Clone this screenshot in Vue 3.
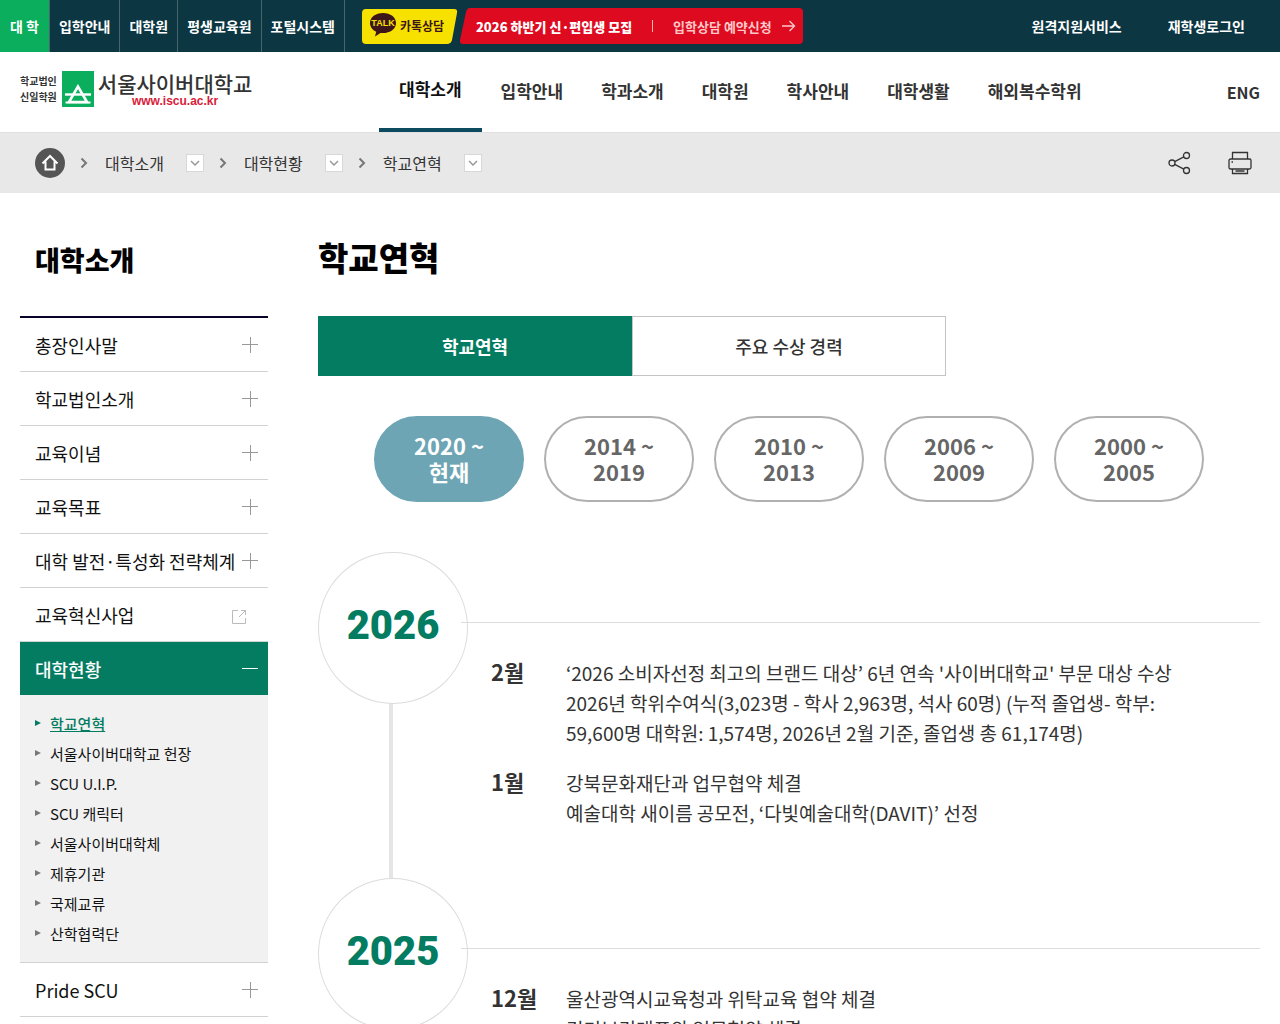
<template>
  <div class="page">
    <div class="topbar">
      <nav class="sites">
        <a v-for="(site, index) in sites" :key="site" href="#" :class="{ on: index === 0 }">{{ site }}</a>
      </nav>
      <a href="#" class="talk">
        <svg class="shape" viewBox="0 0 96 35" aria-hidden="true">
          <path d="M4 0H92Q96 0 95 4L90 31Q89 35 85 35H4Q0 35 0 31V4Q0 0 4 0Z" fill="#f7e100" />
        </svg>
        <svg class="bubble" viewBox="0 0 26 24" aria-hidden="true">
          <path d="M13 0C5.500 0 0 4.300 0 10C0 14 2.500 17 6.200 18.800L5 23.500L10.500 20C19.500 20.800 26 16.500 26 10C26 4.300 20.500 0 13 0Z" fill="#3c1618" />
          <text x="13" y="13" text-anchor="middle">TALK</text>
        </svg>
        <span>카톡상담</span>
      </a>
      <a href="#" class="apply">
        <svg class="shape" viewBox="0 0 343 36" aria-hidden="true">
          <path d="M10 0H339Q343 0 343 4V32Q343 36 339 36H3Q-1 36 0 32L6 4Q7 0 10 0Z" fill="#de0a20" />
        </svg>
        <strong>2026 하반기 신·편입생 모집</strong>
        <i class="bar"></i>
        <span class="reserve">입학상담 예약신청</span>
        <svg class="arrow" viewBox="0 0 14 12" aria-hidden="true">
          <path d="M0 6H12M7.500 1L12.500 6L7.500 11" fill="none" stroke="#ffc9c9" stroke-width="1.400" />
        </svg>
      </a>
      <nav class="util">
        <a href="#">원격지원서비스</a>
        <a href="#">재학생로그인</a>
      </nav>
    </div>

    <header class="header">
      <a href="#" class="logo">
        <span class="corp">학교법인<br />신일학원</span>
        <svg class="mark" viewBox="0 0 32 36" aria-hidden="true">
          <rect width="32" height="36" fill="#0aae5c" />
          <path d="M16 15.500L7 31H25Z" fill="none" stroke="#fff" stroke-width="2.600" />
          <path d="M3 23.500H29" stroke="#fff" stroke-width="2.400" />
          <path d="M3.500 31.500H28.500" stroke="#fff" stroke-width="2" />
        </svg>
        <span class="name">
          <b>서울사이버대학교</b>
          <em>www.iscu.ac.kr</em>
        </span>
      </a>
      <nav class="gnb">
        <a v-for="(menu, index) in menus" :key="menu" href="#" :class="{ on: index === 0 }">{{ menu }}</a>
      </nav>
      <a href="#" class="lang">ENG</a>
    </header>

    <div class="location">
      <a href="#" class="home" aria-label="홈">
        <svg viewBox="0 0 30 30" aria-hidden="true">
          <path d="M7.500 15.500L15 8L22.500 15.500M10.500 13.500V21.500H19.500V13.500" fill="none" stroke="#fff" stroke-width="2" />
        </svg>
      </a>
      <div v-for="crumb in crumbs" :key="crumb" class="crumb">
        <svg class="next" viewBox="0 0 8 12" aria-hidden="true">
          <path d="M1.500 1.500L6 6L1.500 10.500" fill="none" stroke="#777" stroke-width="2" />
        </svg>
        <a href="#">{{ crumb }}</a>
        <button type="button" :aria-label="crumb + ' 메뉴 열기'">
          <svg viewBox="0 0 10 6" aria-hidden="true">
            <path d="M1 1L5 5L9 1" fill="none" stroke="#999" stroke-width="1.500" />
          </svg>
        </button>
      </div>
      <div class="tools">
        <button type="button" aria-label="공유하기">
          <svg viewBox="0 0 24 24" fill="none" stroke="#333" stroke-width="1.300" aria-hidden="true">
            <circle cx="4" cy="12" r="3" />
            <circle cx="18.500" cy="4.500" r="3" />
            <circle cx="18.500" cy="19.500" r="3" />
            <path d="M6.700 10.600L15.800 5.900M6.700 13.400L15.800 18.100" />
          </svg>
        </button>
        <button type="button" aria-label="인쇄하기">
          <svg viewBox="0 0 24 24" fill="none" stroke="#333" stroke-width="1.300" aria-hidden="true">
            <path d="M4.500 8V1.500H19.500V8" />
            <rect x="1" y="8" width="22" height="10" rx="1.500" />
            <path d="M4.500 18V22.500H19.500V18M7.500 20H16.500M3.500 11H5" />
          </svg>
        </button>
      </div>
    </div>

    <div class="container">
      <aside class="side">
        <h2>대학소개</h2>
        <ul class="lnb">
          <li v-for="item in sideMenus" :key="item.name">
            <a href="#" class="depth1" :class="{ on: item.children }">
              {{ item.name }}
              <svg v-if="item.external" class="external" viewBox="0 0 16 16" aria-hidden="true">
                <path d="M7 1.500H1.500V14.500H14.500V9M10 1.500H14.500V6M14.500 1.500L8 8" fill="none" stroke="#bbb" />
              </svg>
              <svg v-else class="toggle" viewBox="0 0 16 16" aria-hidden="true">
                <path :d="item.children ? 'M0 7.5H16' : 'M0 7.5H16M8.5 0V16'" fill="none" stroke="currentColor" />
              </svg>
            </a>
            <ul v-if="item.children" class="depth2">
              <li v-for="(child, index) in item.children" :key="child" :class="{ on: index === 0 }">
                <a href="#">{{ child }}</a>
              </li>
            </ul>
          </li>
        </ul>
      </aside>

      <main class="content">
        <h1>학교연혁</h1>
        <div class="tabs">
          <a href="#" class="on">학교연혁</a>
          <a href="#">주요 수상 경력</a>
        </div>
        <div class="periods">
          <button
            v-for="(period, index) in periods"
            :key="period.from"
            type="button"
            :class="{ on: current === index }"
            @click="current = index"
          >
            {{ period.from }} ~<br />{{ period.to }}
          </button>
        </div>

        <section v-for="item in history" :key="item.year" class="year">
          <div class="rail">
            <h3>{{ item.year }}</h3>
          </div>
          <div class="months">
            <dl v-for="group in item.months" :key="group.month">
              <dt>{{ group.month }}</dt>
              <dd>
                <p v-for="line in group.lines" :key="line">{{ line }}</p>
              </dd>
            </dl>
          </div>
        </section>
      </main>
    </div>
  </div>
</template>

<script setup>
import { ref } from 'vue'

const current = ref(0)

const sites = ['대 학', '입학안내', '대학원', '평생교육원', '포털시스템']
const menus = ['대학소개', '입학안내', '학과소개', '대학원', '학사안내', '대학생활', '해외복수학위']
const crumbs = ['대학소개', '대학현황', '학교연혁']

const sideMenus = [
  { name: '총장인사말' },
  { name: '학교법인소개' },
  { name: '교육이념' },
  { name: '교육목표' },
  { name: '대학 발전·특성화 전략체계' },
  { name: '교육혁신사업', external: true },
  {
    name: '대학현황',
    children: [
      '학교연혁',
      '서울사이버대학교 헌장',
      'SCU U.I.P.',
      'SCU 캐릭터',
      '서울사이버대학체',
      '제휴기관',
      '국제교류',
      '산학협력단'
    ]
  },
  { name: 'Pride SCU' }
]

const periods = [
  { from: '2020', to: '현재' },
  { from: '2014', to: '2019' },
  { from: '2010', to: '2013' },
  { from: '2006', to: '2009' },
  { from: '2000', to: '2005' }
]

const history = [
  {
    year: 2026,
    months: [
      {
        month: '2월',
        lines: [
          "‘2026 소비자선정 최고의 브랜드 대상’ 6년 연속 '사이버대학교' 부문 대상 수상",
          '2026년 학위수여식(3,023명 - 학사 2,963명, 석사 60명) (누적 졸업생- 학부: 59,600명 대학원: 1,574명, 2026년 2월 기준, 졸업생 총 61,174명)'
        ]
      },
      {
        month: '1월',
        lines: ['강북문화재단과 업무협약 체결', '예술대학 새이름 공모전, ‘다빛예술대학(DAVIT)’ 선정']
      }
    ]
  },
  {
    year: 2025,
    months: [
      {
        month: '12월',
        lines: ['울산광역시교육청과 위탁교육 협약 체결', '경기보건대표와 업무협약 체결']
      }
    ]
  }
]
</script>

<style>
body {
  margin: 0;
  background: #fff;
}
</style>

<style scoped>
.page {
  font-family: "Noto Sans CJK KR", "Noto Sans", sans-serif;
  color: #333;
  word-break: keep-all;
}
a {
  color: inherit;
  text-decoration: none;
}
button {
  padding: 0;
  border: none;
  background: none;
  font-family: inherit;
  cursor: pointer;
}
ul {
  list-style: none;
  margin: 0;
  padding: 0;
}
h1,
h2,
h3,
p,
dl,
dd {
  margin: 0;
}
svg {
  display: block;
}

.topbar {
  display: flex;
  align-items: center;
  height: 52px;
  background: #0b3642;
  color: #fff;
  font-size: 14px;
}
.sites {
  display: flex;
  align-self: stretch;
}
.sites a {
  display: flex;
  align-items: center;
  padding: 0 9px;
  border-right: 1px solid #48656e;
  font-weight: 700;
}
.sites .on {
  padding: 0 10px;
  background: #0aae5c;
}
.talk,
.apply {
  position: relative;
  display: flex;
  align-items: center;
}
.shape {
  position: absolute;
  inset: 0;
  width: 100%;
  height: 100%;
}
.talk {
  width: 96px;
  height: 35px;
  margin-left: 17px;
  gap: 4px;
  padding: 0 0 2px 8px;
  box-sizing: border-box;
  color: #3c1618;
  font-size: 12px;
  font-weight: 700;
}
.talk span,
.apply strong,
.apply .reserve {
  position: relative;
  white-space: nowrap;
}
.bubble {
  position: relative;
  width: 26px;
  height: 24px;
}
.bubble text {
  fill: #f7e100;
  font: 900 9px "Liberation Sans", Arial, sans-serif;
}
.apply {
  width: 343px;
  height: 36px;
  margin-left: 2px;
  padding: 0 7px 0 16px;
  box-sizing: border-box;
  font-size: 13px;
}
.apply strong {
  font-weight: 900;
}
.bar {
  position: relative;
  width: 1px;
  height: 12px;
  margin: 0 20px;
  background: #ffb3b3;
}
.reserve {
  color: #ffc9c9;
  font-weight: 700;
}
.arrow {
  position: relative;
  width: 14px;
  height: 12px;
  margin-left: auto;
}
.util {
  display: flex;
  gap: 46px;
  margin-left: auto;
  padding-right: 35px;
  font-weight: 700;
}

.header {
  display: flex;
  align-items: center;
  height: 80px;
  padding: 0 20px;
  border-bottom: 1px solid #e0e0e0;
}
.logo {
  display: flex;
  align-items: center;
  width: 359px;
  padding-bottom: 6px;
}
.corp {
  font-size: 10px;
  font-weight: 700;
  line-height: 16px;
}
.mark {
  width: 32px;
  height: 36px;
  margin: 0 4px 0 5px;
}
.name b {
  display: block;
  font-size: 21px;
  font-weight: 500;
  line-height: 24px;
}
.name em {
  display: block;
  color: #d9203a;
  font: bold 12px/12px "Liberation Sans", Arial, sans-serif;
  text-align: center;
}
.gnb {
  display: flex;
  align-self: stretch;
}
.gnb a {
  display: flex;
  align-items: center;
  padding: 0 19px 4px;
  font-size: 17px;
  font-weight: 700;
}
.gnb a:first-child {
  padding: 0 20px 4px;
}
.gnb .on {
  border-bottom: 4px solid #0b4a5f;
  color: #111;
}
.lang {
  margin-left: auto;
  font-size: 16px;
  font-weight: 700;
}

.location {
  display: flex;
  align-items: center;
  height: 60px;
  padding: 0 28px 0 35px;
  background: #e8e8e8;
}
.home {
  width: 30px;
  height: 30px;
  border-radius: 50%;
  background: #555;
}
.crumb {
  display: flex;
  align-items: center;
  padding-left: 15px;
  font-size: 16px;
}
.next {
  width: 8px;
  height: 12px;
  margin-right: 17px;
}
.crumb button {
  display: flex;
  align-items: center;
  justify-content: center;
  width: 18px;
  height: 18px;
  margin-left: 22px;
  border: 1px solid #d8d8d8;
  background: #fff;
}
.crumb button svg {
  width: 10px;
  height: 6px;
}
.tools {
  display: flex;
  gap: 36px;
  margin-left: auto;
}
.tools svg {
  width: 24px;
  height: 24px;
}

.container {
  display: grid;
  grid-template-columns: 248px 1fr;
  gap: 50px;
  align-items: start;
  padding: 0 20px;
}
.side h2 {
  padding: 49px 15px 38px;
  color: #000;
  font-size: 27px;
  font-weight: 900;
  line-height: 36px;
}
.lnb {
  border-top: 2px solid #0b0229;
}
.depth1 {
  display: flex;
  align-items: center;
  justify-content: space-between;
  height: 53px;
  padding: 0 10px 0 15px;
  border-bottom: 1px solid #d2d2d2;
  color: #111;
  font-size: 18px;
  white-space: nowrap;
}
.depth1.on {
  background: #037c62;
  border-bottom: none;
  color: #fff;
  font-weight: 500;
}
.toggle {
  flex: none;
  width: 16px;
  height: 16px;
  color: #999;
}
.on .toggle {
  color: #fff;
}
.external {
  width: 16px;
  height: 16px;
  margin: 5px 11px 0 0;
}
.depth2 {
  padding: 13px 15px 14px;
  border-bottom: 1px solid #d2d2d2;
  background: #f1f1f1;
}
.depth2 li {
  display: flex;
  align-items: center;
  gap: 9px;
  height: 30px;
  color: #111;
  font-size: 15px;
}
.depth2 li::before {
  content: "";
  border: 3px solid transparent;
  border-left: 6px solid #777;
  border-right: none;
}
.depth2 .on {
  color: #037c62;
  font-weight: 500;
}
.depth2 .on::before {
  border-left-color: #037c62;
}
.depth2 .on a {
  text-decoration: underline;
}

.content h1 {
  padding: 44px 0 39px;
  color: #000;
  font-size: 33px;
  font-weight: 900;
  line-height: 40px;
}
.tabs {
  display: grid;
  grid-template-columns: repeat(3, 1fr);
}
.tabs a {
  display: flex;
  align-items: center;
  justify-content: center;
  height: 58px;
  border: 1px solid #c4c4c4;
  font-size: 18px;
  font-weight: 500;
}
.tabs .on {
  border-color: #037c62;
  background: #037c62;
  color: #fff;
  font-weight: 700;
}
.periods {
  display: flex;
  justify-content: center;
  gap: 20px;
  margin: 40px 0 50px;
}
.periods button {
  width: 150px;
  height: 86px;
  padding-bottom: 2px;
  border: 2px solid #b0b0b0;
  border-radius: 43px;
  color: #666;
  font-size: 22px;
  font-weight: 700;
  line-height: 26px;
}
.periods .on {
  border-color: #6da5b4;
  background: #6da5b4;
  color: #fff;
}

.year {
  display: flex;
  min-height: 326px;
}
.rail {
  width: 150px;
  background: linear-gradient(#e5e5e5, #e5e5e5) 71px 0 / 4px 100% no-repeat;
}
.rail h3 {
  height: 150px;
  border: 1px solid #dcdcdc;
  border-radius: 50%;
  background: #fff;
  color: #037c62;
  font-family: Roboto, sans-serif;
  font-size: 40px;
  font-weight: 900;
  line-height: 146px;
  text-align: center;
}
.months {
  flex: 1;
  margin-top: 70px;
  margin-left: -7px;
  padding: 35px 30px 0;
  border-top: 1px solid #dcdcdc;
}
.months dl {
  display: grid;
  grid-template-columns: 75px 1fr;
  margin-bottom: 20px;
  line-height: 30px;
}
.months dt {
  font-size: 22px;
  font-weight: 700;
  line-height: 26px;
}
.months dd {
  font-size: 19px;
}
</style>
